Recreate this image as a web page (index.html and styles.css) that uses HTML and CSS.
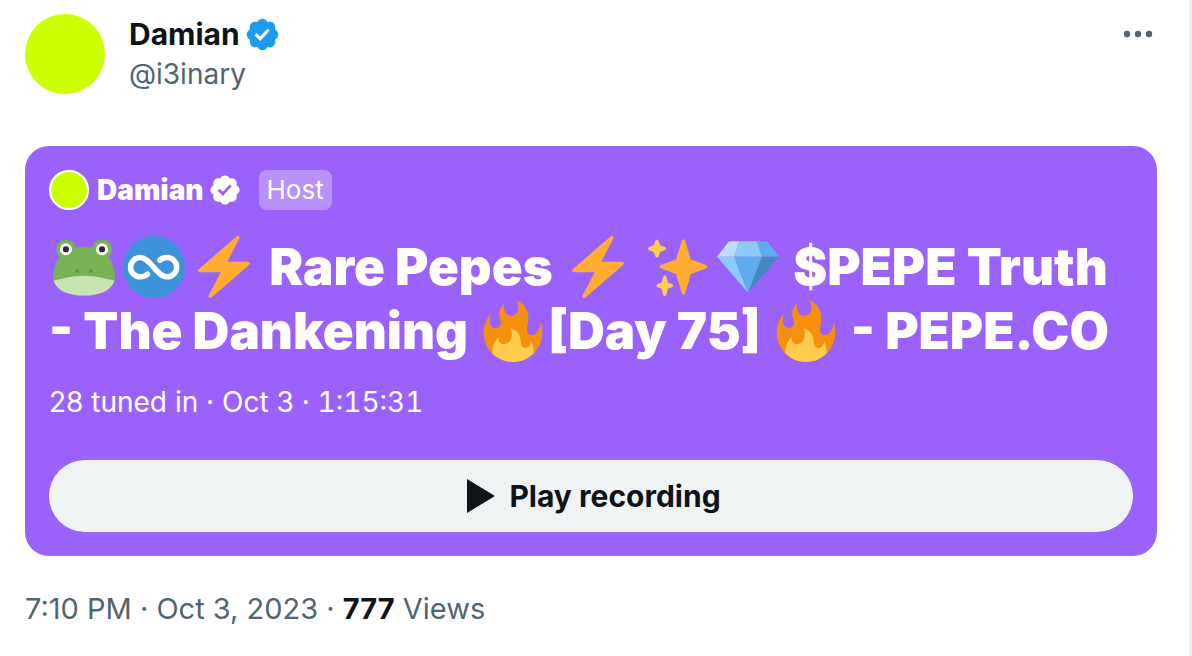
FILE: index.html
```html
<!DOCTYPE html>
<html lang="en">
  <head>
    <meta charset="UTF-8" />
    <meta name="viewport" content="width=device-width, initial-scale=1.0" />
    <title>Damian (@i3inary)</title>
    <link rel="stylesheet" href="styles.css">
  </head>
  <body>
    <!-- shared icons -->
    <svg class="sprite" aria-hidden="true">
      <symbol id="verified" viewBox="0 0 22 22">
        <path d="M20.396 11c-.018-.646-.215-1.275-.57-1.816-.354-.54-.852-.972-1.438-1.246.223-.607.27-1.264.14-1.897-.131-.634-.437-1.218-.882-1.687-.47-.445-1.053-.75-1.687-.882-.633-.13-1.29-.083-1.897.14-.273-.587-.704-1.086-1.245-1.44S11.647 1.62 11 1.604c-.646.017-1.273.213-1.813.568s-.969.854-1.24 1.44c-.608-.223-1.267-.272-1.902-.14-.635.13-1.22.436-1.69.882-.445.47-.749 1.055-.878 1.688-.13.633-.08 1.29.144 1.896-.587.274-1.087.705-1.443 1.245-.356.54-.555 1.17-.574 1.817.02.647.218 1.276.574 1.817.356.54.856.972 1.443 1.245-.224.606-.274 1.263-.144 1.896.13.634.433 1.218.877 1.688.47.443 1.054.747 1.687.878.633.132 1.29.084 1.897-.136.274.586.705 1.084 1.246 1.439.54.354 1.17.551 1.816.569.647-.016 1.276-.213 1.817-.567s.972-.854 1.245-1.44c.604.239 1.266.296 1.903.164.636-.132 1.22-.447 1.68-.907.46-.46.776-1.044.908-1.681s.075-1.299-.165-1.903c.586-.274 1.084-.705 1.439-1.246.354-.54.551-1.17.569-1.816zM9.662 14.85l-3.429-3.428 1.293-1.302 2.072 2.072 4.4-4.794 1.347 1.246z" />
      </symbol>
      <symbol id="bolt" viewBox="0 0 36 36">
        <path fill="#ffac33" d="M32.938 15.651C32.792 15.26 32.418 15 32 15H19.925L26.89 1.458c.219-.426.106-.947-.271-1.243C26.437.071 26.218 0 26 0c-.233 0-.466.082-.653.243L18 6.588 3.347 19.243c-.316.273-.43.714-.284 1.105S3.582 21 4 21h12.075L9.11 34.542c-.219.426-.106.947.271 1.243.182.144.401.215.619.215.233 0 .466-.082.653-.243L18 29.412l14.653-12.655c.317-.273.43-.714.285-1.106z" />
      </symbol>
      <symbol id="fire" viewBox="0 0 36 36">
        <path fill="#f4900c" d="M35 19c0-2.062-.367-4.039-1.04-5.868-.46 5.389-3.333 8.157-6.335 6.868-2.812-1.208-.917-5.917-.777-8.164.236-3.809-.012-8.169-6.931-11.794 2.875 5.5.333 8.917-2.333 9.125-2.958.231-5.667-2.542-4.667-7.042-3.238 2.386-3.332 6.402-2.333 9 1.042 2.708-.042 4.958-2.583 5.208-2.84.28-4.418-3.041-2.963-8.333C2.52 10.965 1 14.805 1 19c0 9.389 7.611 17 17 17s17-7.611 17-17z" />
        <path fill="#ffcc4d" d="M28.394 23.999c.148 3.084-2.561 4.293-4.019 3.709-2.106-.843-1.541-2.291-2.083-5.291s-2.625-5.083-5.708-6c2.25 6.333-1.247 8.667-3.08 9.084-1.872.426-3.753-.001-3.968-4.007C7.352 23.668 6 26.676 6 30c0 .368.023.73.055 1.09C9.125 34.124 13.342 36 18 36s8.875-1.876 11.945-4.91c.032-.36.055-.722.055-1.09 0-2.187-.584-4.236-1.606-6.001z" />
      </symbol>
    </svg>

    <article class="tweet">
      <header class="author">
        <div class="avatar"></div>
        <div class="author-info">
          <div class="name">
            Damian
            <svg class="badge" aria-label="Verified"><use href="#verified" /></svg>
          </div>
          <a class="handle" href="#">@i3inary</a>
        </div>
        <button class="more" aria-label="More">
          <svg viewBox="0 0 30 8">
            <circle cx="4" cy="4" r="3.2" />
            <circle cx="15" cy="4" r="3.2" />
            <circle cx="26" cy="4" r="3.2" />
          </svg>
        </button>
      </header>

      <section class="space">
        <div class="host">
          <div class="avatar small"></div>
          <span class="host-name">Damian</span>
          <svg class="badge" aria-label="Verified"><use href="#verified" /></svg>
          <span class="host-tag">Host</span>
        </div>

        <h2 class="title">
          <svg class="emoji" viewBox="0 0 36 36" aria-label="frog">
            <circle cx="7.5" cy="7.7" r="5.7" fill="#77b255" />
            <circle cx="28.5" cy="7.7" r="5.7" fill="#77b255" />
            <path fill="#77b255" d="M36 23.5C36 30.5 28 34.5 18 34.5S0 30.5 0 23.5C0 20 1.3 16.5 3.5 12.5 6 8.5 12 6.3 18 6.3s12 2.2 14.5 6.2C34.7 16.5 36 20 36 23.5z" />
            <path fill="#c6e5b3" d="M.4 25.8C6 24.8 10.5 23.1 18 23.1s12 1.7 17.6 2.7C34.3 31.3 27.5 34.6 18 34.6S1.7 31.3.4 25.8z" />
            <circle cx="7.5" cy="7.7" r="3.5" fill="#fff" />
            <circle cx="28.5" cy="7.7" r="3.5" fill="#fff" />
            <circle cx="7.5" cy="7.7" r="1.8" fill="#292f33" />
            <circle cx="28.5" cy="7.7" r="1.8" fill="#292f33" />
            <circle cx="14" cy="20.3" r="1" fill="#5c913b" />
            <circle cx="22" cy="20.3" r="1" fill="#5c913b" />
          </svg><svg class="emoji" viewBox="0 0 36 36" aria-label="infinity">
            <circle cx="18" cy="18" r="18" fill="#3b94d9" />
            <path fill="none" stroke="#fff" stroke-width="3.2" stroke-linecap="round" d="M14.2 22.2C13 23.3 11.600 23.700 10 23.700a5.600 5.600 0 0 1 0-11.200C16.200 12.500 19.200 23.700 25.600 23.700a5.600 5.600 0 0 0 0-11.200C24 12.500 22.600 12.900 21.400 14" />
          </svg><svg class="emoji" aria-label="lightning"><use href="#bolt" /></svg>
          Rare Pepes
          <svg class="emoji" aria-label="lightning"><use href="#bolt" /></svg>
          <svg class="emoji" viewBox="0 0 36 36" aria-label="sparkles">
            <path fill="#ffac33" d="M34.347 16.893l-8.899-3.294-3.323-10.891c-.128-.42-.517-.708-.956-.708-.439 0-.828.288-.956.708l-3.322 10.891-8.9 3.294c-.393.146-.653.519-.653.938 0 .418.26.793.653.938l8.895 3.293 3.324 11.223c.126.424.516.715.959.715.442 0 .833-.291.959-.716l3.324-11.223 8.896-3.293c.391-.144.652-.518.652-.937 0-.418-.261-.792-.653-.938z" />
            <path fill="#ffcc4d" d="M14.472 27.894l-2.318-.859-.863-3.33c-.112-.432-.506-.734-.952-.734s-.84.302-.952.734l-.863 3.33-2.317.858c-.393.145-.653.519-.653.938 0 .418.26.793.653.938l2.308.855.875 3.477c.108.437.498.742.949.742s.841-.305.949-.742l.875-3.477 2.309-.855c.392-.145.653-.52.653-.938 0-.419-.261-.793-.653-.937z" />
            <path fill="#ffcc4d" d="M10.3 6.4l-2.6-.96-.96-2.6c-.145-.393-.519-.653-.938-.653-.418 0-.793.26-.938.653l-.96 2.6-2.6.96c-.393.145-.653.519-.653.938 0 .418.26.793.653.938l2.6.96.96 2.6c.145.393.52.653.938.653.419 0 .793-.26.938-.653l.96-2.6 2.6-.96c.393-.145.653-.52.653-.938 0-.419-.26-.793-.653-.938z" />
          </svg><svg class="emoji" viewBox="0 0 36 36" aria-label="gem">
            <path fill="#bdddf4" d="M13 3H7l-7 9h10z" />
            <path fill="#5dadec" d="M36 12l-7-9h-6l3 9z" />
            <path fill="#4289c1" d="M26 12h10L18 33z" />
            <path fill="#8ccaf7" d="M10 12H0l18 21zm3-9l-3 9h16l-3-9z" />
            <path fill="#5dadec" d="M18 33l-8-21h16z" />
          </svg>
          $PEPE Truth
          <br />
          - The Dankening
          <svg class="emoji" aria-label="fire"><use href="#fire" /></svg>[Day 75]
          <svg class="emoji" aria-label="fire"><use href="#fire" /></svg>
          - PEPE.CO
        </h2>

        <p class="details">28 tuned in · Oct 3 · <time>1:15:31</time></p>

        <button class="play">
          <svg viewBox="0 0 28 34"><path d="M0 0l28 17L0 34z" /></svg>
          Play recording
        </button>
      </section>

      <footer class="stats">
        <time>7:10 PM · Oct 3, 2023</time> · <strong>777</strong> Views
      </footer>
    </article>
  </body>
</html>
```

FILE: styles.css
```css
body {
  margin: 0;
  background-color: #fff;
  color: #0f1419;
  font-family: Inter, "Liberation Sans", sans-serif;
  font-size: 28px;
}
button {
  border: none;
  padding: 0;
  font-family: inherit;
  cursor: pointer;
}
.sprite {
  position: absolute;
  width: 0;
  height: 0;
}
.tweet {
  box-sizing: border-box;
  min-height: 100vh;
  padding: 14px 32px 24px 25px;
  border-right: 3px solid #eff3f4;
}

/* author */
.author {
  display: flex;
  align-items: flex-start;
}
.avatar {
  box-sizing: border-box;
  flex: none;
  width: 80px;
  height: 80px;
  border-radius: 50%;
  background-color: #cf0;
}
.author-info {
  flex: 1;
  margin-left: 24px;
  line-height: 40px;
}
.name {
  display: flex;
  align-items: center;
  gap: 4px;
  font-size: 30px;
  font-weight: 700;
}
.badge {
  flex: none;
  width: 37px;
  height: 37px;
  fill: #1d9bf0;
}
.handle {
  color: #536471;
  text-decoration: none;
}
.more {
  display: flex;
  align-items: center;
  height: 40px;
  margin-right: 4px;
  background: none;
}
.more svg {
  width: 30px;
  height: 8px;
  fill: #536471;
}

/* space card */
.space {
  margin-top: 52px;
  padding: 24px;
  border-radius: 24px;
  background-color: #9b62fb;
  color: #fff;
}
.host {
  display: flex;
  align-items: center;
  height: 40px;
}
.avatar.small {
  width: 40px;
  height: 40px;
  border: 2px solid #fff;
}
.host-name {
  margin: 0 4px 0 8px;
  font-weight: 900;
}
.host .badge {
  width: 34px;
  height: 34px;
  fill: #fff;
}
.host-tag {
  margin-left: 17px;
  padding: 0 8px;
  border-radius: 8px;
  background-color: rgba(255, 255, 255, 0.3);
  font-size: 26px;
  line-height: 40px;
}
.title {
  margin: 25px 0 19px;
  font-size: 51px;
  font-weight: 900;
  line-height: 64px;
}
.emoji {
  width: 62px;
  height: 62px;
  margin: 0 4px;
  vertical-align: -13px;
}
.details {
  margin: 0 0 38px;
  line-height: 40px;
}
.details time {
  font-variant-numeric: tabular-nums;
}
.play {
  display: flex;
  align-items: center;
  justify-content: center;
  gap: 14px;
  width: 100%;
  height: 72px;
  padding-left: 6px;
  border-radius: 36px;
  background-color: #eff3f4;
  color: #0f1419;
  font-size: 30px;
  font-weight: 700;
}
.play svg {
  width: 28px;
  height: 34px;
  fill: #0f1419;
}

.stats {
  margin-top: 33px;
  color: #536471;
  font-size: 29px;
  line-height: 40px;
}
.stats strong {
  color: #0f1419;
}
```
